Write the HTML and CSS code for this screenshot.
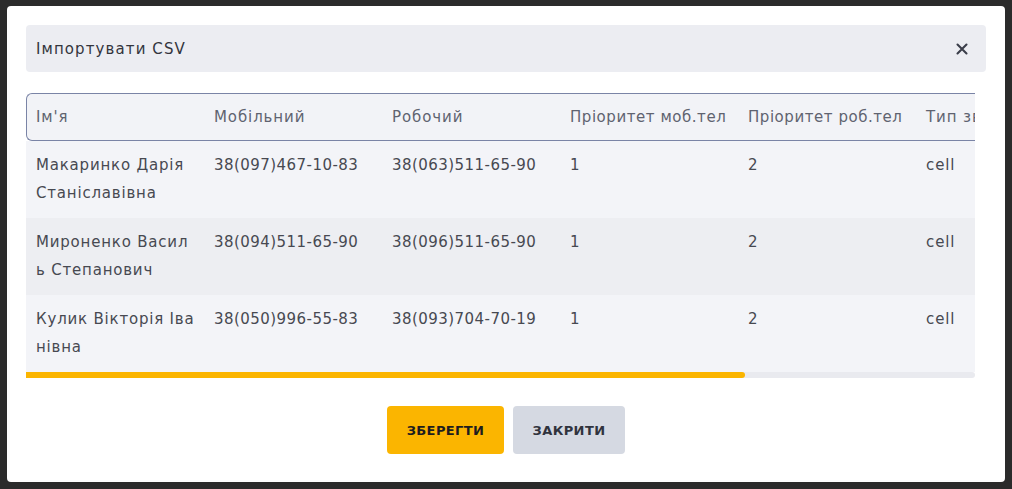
FILE: index.html
```html
<!DOCTYPE html>
<html lang="uk">
<head>
<meta charset="utf-8">
<title>Імпортувати CSV</title>
<link rel="stylesheet" href="styles.css">
</head>
<body>
<div class="backdrop">
  <div class="modal">
    <div class="modal-head">
      <span class="modal-title">Імпортувати CSV</span>
      <button class="close-btn" type="button" aria-label="Закрити">
        <svg width="12" height="12" viewBox="0 0 12 12"><path d="M1.5 1.5 L10.5 10.5 M10.5 1.5 L1.5 10.5" stroke="#3b3e4a" stroke-width="2.1" stroke-linecap="round" fill="none"/></svg>
      </button>
    </div>
    <div class="table-wrap">
      <table class="grid">
        <thead>
          <tr>
            <th>Ім'я</th>
            <th>Мобільний</th>
            <th>Робочий</th>
            <th>Пріоритет моб.тел</th>
            <th>Пріоритет роб.тел</th>
            <th>Тип зв'язку</th>
            <th>Коментар</th>
          </tr>
        </thead>
        <tbody>
          <tr>
            <td class="name">Макаринко Дарія Станіславівна</td>
            <td class="num">38(097)467-10-83</td>
            <td class="num">38(063)511-65-90</td>
            <td>1</td>
            <td>2</td>
            <td>cell</td>
            <td></td>
          </tr>
          <tr>
            <td class="name">Мироненко Василь Степанович</td>
            <td class="num">38(094)511-65-90</td>
            <td class="num">38(096)511-65-90</td>
            <td>1</td>
            <td>2</td>
            <td>cell</td>
            <td></td>
          </tr>
          <tr>
            <td class="name">Кулик Вікторія Іванівна</td>
            <td class="num">38(050)996-55-83</td>
            <td class="num">38(093)704-70-19</td>
            <td>1</td>
            <td>2</td>
            <td>cell</td>
            <td></td>
          </tr>
        </tbody>
      </table>
    </div>
    <div class="scroll-track"><div class="scroll-thumb" style="width:75.8%"></div></div>
    <div class="actions">
      <button class="btn btn-save" type="button">Зберегти</button>
      <button class="btn btn-close" type="button">Закрити</button>
    </div>
  </div>
</div>
</body>
</html>
```
FILE: styles.css
```css
* { box-sizing: border-box; }
html, body {
  margin: 0;
  padding: 0;
  height: 100%;
}
body {
  background: #2b2b2b;
  font-family: "DejaVu Sans", "Liberation Sans", sans-serif;
  color: #474951;
}
.backdrop {
  padding: 6px 7px 6px 7px;
}
.modal {
  background: #ffffff;
  border-radius: 4px;
  padding: 19px 19px 28px 19px;
}
.modal-head {
  height: 47px;
  background: #ecedf2;
  border-radius: 4px;
  display: flex;
  align-items: center;
  justify-content: space-between;
  padding: 0 12px 0 10px;
}
.modal-title {
  font-size: 15px;
  letter-spacing: 1.1px;
  color: #33353d;
}
.close-btn {
  width: 24px;
  height: 24px;
  border: 0;
  padding: 0;
  background: transparent;
  display: flex;
  align-items: center;
  justify-content: center;
}
.table-wrap {
  margin-top: 21px;
  margin-right: 11px;
  overflow: hidden;
}
.grid {
  width: 1246px;
  table-layout: fixed;
  border-collapse: separate;
  border-spacing: 0;
  font-size: 15px;
  letter-spacing: 0.9px;
}
.grid th {
  height: 48px;
  padding: 0 10px;
  text-align: left;
  font-weight: normal;
  color: #5f6370;
  background: #f2f3f7;
  border-top: 1px solid #7a84a6;
  border-bottom: 1px solid #7a84a6;
  white-space: nowrap;
  overflow: hidden;
}
.grid th:nth-child(4),
.grid th:nth-child(5) {
  letter-spacing: 0.55px;
}
.grid th:first-child {
  border-left: 1px solid #7a84a6;
  border-radius: 6px 0 0 6px;
  padding-left: 9px;
}
.grid th:last-child {
  border-right: 1px solid #7a84a6;
  border-radius: 0 6px 6px 0;
}
.grid td {
  padding: 10px 10px 11px 10px;
  line-height: 28px;
  vertical-align: top;
  background: #f3f4f8;
}
.grid tbody tr:nth-child(even) td {
  background: #edeef2;
}
.grid td.name {
  word-break: break-all;
  letter-spacing: 0.8px;
  padding-right: 7.5px;
}
.grid td.num {
  letter-spacing: 0.45px;
}
.scroll-track {
  height: 6px;
  margin-right: 11px;
  background: #e9eaef;
  border-radius: 0 3px 3px 0;
}
.scroll-thumb {
  height: 6px;
  background: #fbb500;
  border-radius: 0 3px 3px 0;
}
.actions {
  margin-top: 28px;
  display: flex;
  justify-content: center;
  gap: 9px;
}
.btn {
  height: 48px;
  border: 0;
  border-radius: 4px;
  font-family: "DejaVu Sans", "Liberation Sans", sans-serif;
  font-weight: bold;
  font-size: 13px;
  letter-spacing: 0.4px;
  text-transform: uppercase;
  padding: 0 18px;
}
.btn-save {
  width: 117px;
  background: #fbb500;
  color: #1d1d1f;
}
.btn-close {
  width: 112px;
  background: #d5d9e2;
  color: #30333d;
}
```
